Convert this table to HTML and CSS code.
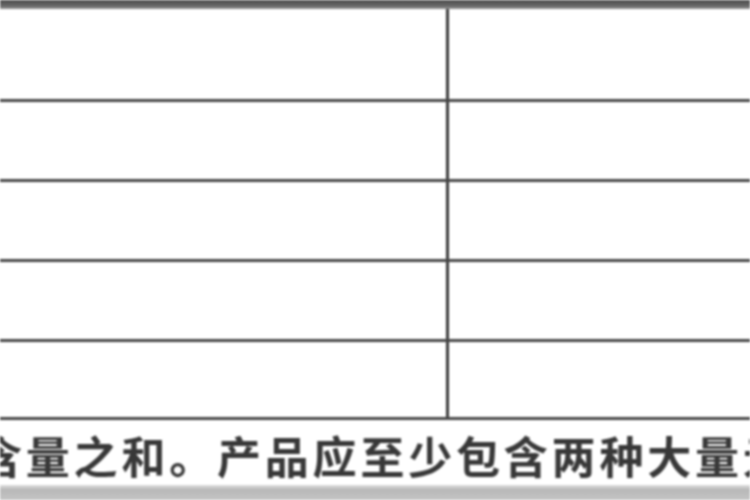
FILE: index.html
```html
<!DOCTYPE html>
<html lang="zh">
<head>
<meta charset="utf-8">
<link rel="stylesheet" href="styles.css">
</head>
<body>
<div class="page">
  <div class="topbar"></div>
  <div class="table">
    <div class="row r1"><div class="cell left"></div><div class="cell right"></div></div>
    <div class="row r2"><div class="cell left"></div><div class="cell right"></div></div>
    <div class="row r3"><div class="cell left"></div><div class="cell right"></div></div>
    <div class="row r4"><div class="cell left"></div><div class="cell right"></div></div>
    <div class="row r5"><div class="cell left"></div><div class="cell right"></div></div>
  </div>
  <div class="textline"><span class="txt">含量之和。产品应至少包含两种大量元素</span></div>
  <div class="bottombar"></div>
</div>
</body>
</html>
```
FILE: styles.css
```css
html, body {
  margin: 0;
  padding: 0;
  background: #ffffff;
}
.page {
  width: 750px;
  height: 500px;
  overflow: hidden;
  display: flex;
  flex-direction: column;
  filter: blur(0.8px);
}
.topbar {
  height: 9px;
  flex: none;
  background: linear-gradient(#4a4a4a, #6a6a6a 70%, #9a9a9a);
}
.table {
  display: flex;
  flex-direction: column;
  flex: none;
}
.row {
  display: flex;
  border-bottom: 3px solid #474747;
}
.r1 { height: 90px; }
.r2, .r3, .r4 { height: 77px; }
.r5 { height: 75px; }
.cell.left {
  width: 446px;
  border-right: 3px solid #3a3a3a;
  flex: none;
}
.cell.right {
  flex: 1;
}
.textline {
  height: 65px;
  flex: none;
  display: flex;
  align-items: center;
  overflow: hidden;
  white-space: nowrap;
}
.txt {
  margin-left: -22px;
  font-family: "Noto Sans CJK SC", sans-serif;
  font-weight: 700;
  font-size: 44px;
  letter-spacing: 3.8px;
  color: #383838;
  line-height: 1;
  padding-top: 4px;
}
.bottombar {
  flex: 1;
  background: linear-gradient(#e0e0e0, #b8b8b8 30%, #c4c4c4);
}
```
